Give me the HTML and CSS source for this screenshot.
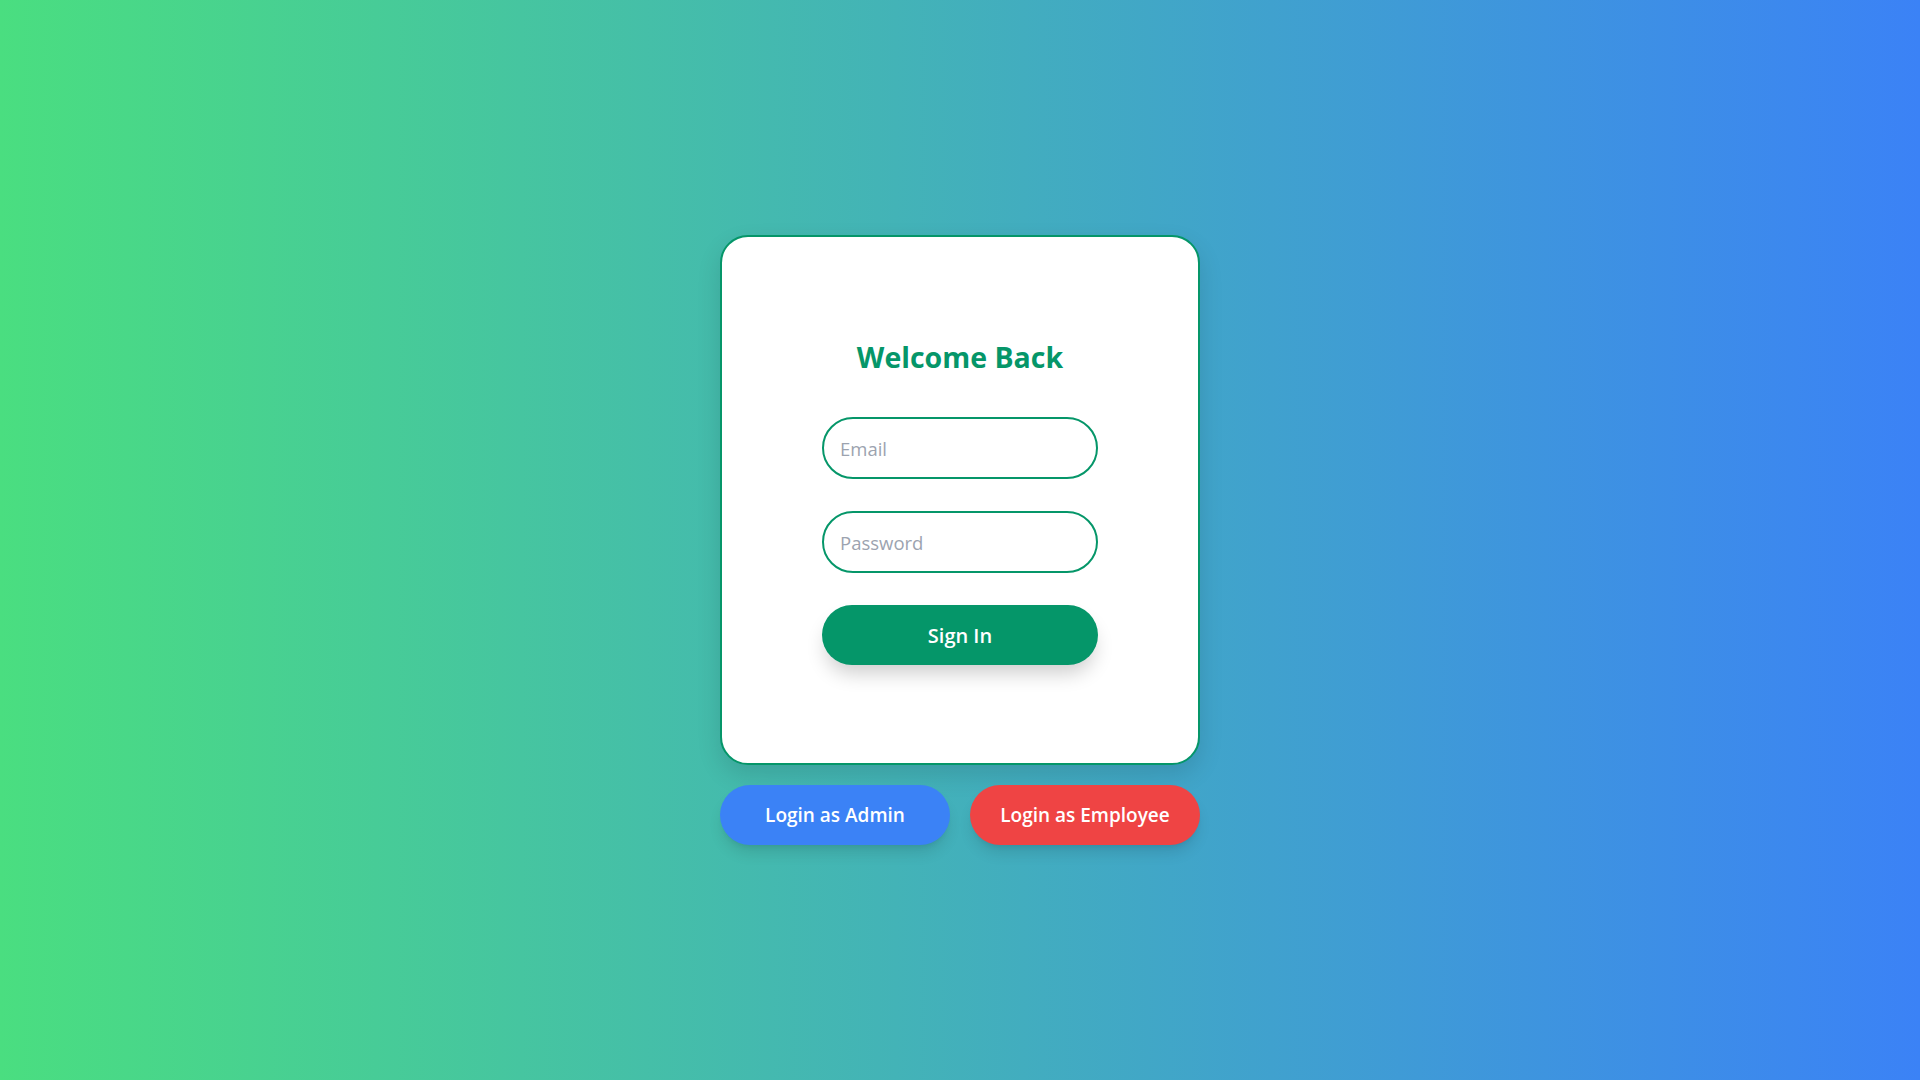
FILE: index.html
```html
<!DOCTYPE html>
<html lang="en">
<head>
<meta charset="utf-8">
<title>Login</title>
<link rel="stylesheet" href="styles.css">
</head>
<body>
<main class="page">
  <div class="stack">
    <form class="card">
      <h1 class="title">Welcome Back</h1>
      <input class="field" type="email" placeholder="Email">
      <input class="field" type="password" placeholder="Password">
      <button class="btn btn-primary" type="button">Sign In</button>
    </form>
    <div class="roles">
      <button class="btn btn-admin" type="button">Login as Admin</button>
      <button class="btn btn-employee" type="button">Login as Employee</button>
    </div>
  </div>
</main>
</body>
</html>
```
FILE: styles.css
```css
* { box-sizing: border-box; }
html, body { margin: 0; height: 100%; }
body {
  font-family: "Open Sans", "Noto Sans", sans-serif;
  background: linear-gradient(to right, #4ade80, #3b82f6);
}
.page {
  height: 100vh;
  display: flex;
  align-items: center;
  justify-content: center;
}
.stack {
  width: 480px;
  display: flex;
  flex-direction: column;
  gap: 20px;
}
.card {
  height: 530px;
  padding-top: 4px;
  background: #fff;
  border: 2px solid #059669;
  border-radius: 28px;
  box-shadow: 0 10px 25px rgba(0,0,0,0.12);
  display: flex;
  flex-direction: column;
  align-items: center;
  justify-content: center;
  gap: 32px;
}
.title {
  margin: 0 0 10px;
  font-size: 28.5px;
  line-height: 36px;
  font-weight: 700;
  color: #059669;
}
.field {
  width: 276px;
  height: 62px;
  border: 2px solid #059669;
  border-radius: 999px;
  padding: 0 16px;
  font-family: inherit;
  font-size: 18.5px;
  color: #111;
  outline: none;
  background: #fff;
}
.field::placeholder { color: #9ca3af; }
.btn {
  height: 60px;
  border: none;
  border-radius: 999px;
  color: #fff;
  font-family: inherit;
  font-size: 19px;
  font-weight: 600;
  cursor: pointer;
  box-shadow: 0 10px 15px -3px rgba(0,0,0,0.12), 0 4px 6px -4px rgba(0,0,0,0.1);
}
.btn-primary {
  width: 276px;
  font-size: 20px;
  background: #059669;
  box-shadow: 0 12px 20px -4px rgba(0,0,0,0.2);
}
.roles {
  display: flex;
  gap: 20px;
}
.roles .btn { flex: 1; }
.btn-admin { background: #3b82f6; }
.btn-employee { background: #ef4444; }
```
